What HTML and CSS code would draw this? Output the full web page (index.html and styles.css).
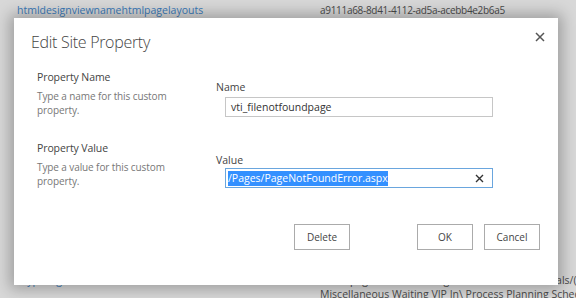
FILE: index.html
```html
<!DOCTYPE html>
<html>
<head>
<meta charset="utf-8">
<link rel="stylesheet" href="styles.css">
</head>
<body>
<div class="page">
  <div class="bg-row bg-top">
    <a class="bg-link">htmldesignviewnamehtmlpagelayouts</a>
    <span class="bg-text bg-guid">a9111a68-8d41-4112-ad5a-acebb4e2b6a5</span>
  </div>
  <div class="bg-spacer"></div>
  <div class="bg-row bg-mid">
    <a class="bg-link">htypeshgthmltlanderslhtmlhtml</a>
    <span class="bg-text">/sites/pages/ViewFormPages/Internals/MainPortals/(</span>
  </div>
  <div class="bg-row bg-bottom">
    <span class="bg-link"></span>
    <span class="bg-text">Miscellaneous Waiting VIP In\ Process Planning Schedule</span>
  </div>

  <div class="dialog">
    <div class="dialog-header">
      <h1 class="title">Edit Site Property</h1>
      <svg class="close" width="10" height="10" viewBox="0 0 10 10"><path d="M1 1L9 9M9 1L1 9" stroke="#555" stroke-width="1.5" fill="none"/></svg>
    </div>
    <div class="field field-name">
      <div class="field-info">
        <h3 class="field-title">Property Name</h3>
        <p class="field-desc">Type a name for this custom property.</p>
      </div>
      <div class="field-control">
        <div class="field-label">Name</div>
        <div class="input"><span class="input-text">vti_filenotfoundpage</span></div>
      </div>
    </div>
    <div class="field field-value">
      <div class="field-info">
        <h3 class="field-title">Property Value</h3>
        <p class="field-desc">Type a value for this custom property.</p>
      </div>
      <div class="field-control">
        <div class="field-label">Value</div>
        <div class="input input-focus"><span class="input-text selected">/Pages/PageNotFoundError.aspx</span>
          <svg class="clear" width="9" height="9" viewBox="0 0 9 9"><path d="M1 1L8 8M8 1L1 8" stroke="#333" stroke-width="1.4" fill="none"/></svg>
        </div>
      </div>
    </div>
    <div class="actions">
      <button class="btn">Delete</button>
      <div class="actions-right">
        <button class="btn">OK</button>
        <button class="btn">Cancel</button>
      </div>
    </div>
  </div>
</div>
</body>
</html>
```

FILE: styles.css
```css
html, body {
  margin: 0;
  padding: 0;
}
body {
  font-family: "Segoe UI", "Open Sans", sans-serif;
  background: #d8d8d8;
}
.page {
  position: relative;
  width: 576px;
  height: 298px;
  overflow: hidden;
  background: #d8d8d8;
}
.bg-row {
  display: flex;
  font-size: 10.5px;
  line-height: 14px;
  white-space: nowrap;
}
.bg-top {
  padding-top: 3px;
}
.bg-link {
  width: 303px;
  padding-left: 17px;
  color: #3a7ab8;
  flex: none;
}
.bg-text {
  color: #4a4a4a;
}
.bg-guid {
  font-size: 10px;
  letter-spacing: -0.3px;
}
.bg-spacer {
  height: 256px;
}
.dialog {
  position: absolute;
  left: 14px;
  top: 18px;
  width: 544px;
  height: 267px;
  box-sizing: border-box;
  background: #fff;
  box-shadow: 0 0 14px 4px rgba(0, 0, 0, 0.28);
  padding: 13px 17px 0 17px;
  color: #444;
}
.dialog-header {
  display: flex;
  justify-content: space-between;
  align-items: flex-start;
}
.title {
  margin: 0;
  font-size: 16px;
  font-weight: 300;
  letter-spacing: -0.3px;
  line-height: 22px;
  color: #444;
}
.close {
  margin-top: 1px;
  margin-right: -4px;
}
.field {
  display: grid;
  grid-template-columns: 179px 1fr;
  padding-left: 6px;
}
.field-name {
  margin-top: 17px;
}
.field-value {
  margin-top: 24px;
}
.field-title {
  margin: 0;
  font-size: 10.5px;
  font-weight: 400;
  letter-spacing: -0.1px;
  line-height: 15px;
  color: #444;
}
.field-desc {
  margin: 4px 0 0;
  width: 140px;
  font-size: 10px;
  letter-spacing: -0.1px;
  line-height: 14px;
  color: #777;
}
.field-label {
  font-size: 10.5px;
  line-height: 15px;
  color: #444;
}
.field-name .field-control {
  padding-top: 10px;
}
.field-value .field-control {
  padding-top: 12px;
}
.input {
  display: flex;
  align-items: center;
  justify-content: space-between;
  margin-left: 9px;
  margin-top: 2px;
  width: 268px;
  height: 20px;
  box-sizing: border-box;
  border: 1px solid #c6c6c6;
  padding: 0 5px 0 5px;
  font-size: 10.5px;
  color: #333;
}
.input-focus {
  margin-top: 0;
  border-color: #6aa6de;
  padding-left: 2px;
}
.selected {
  background: #3390ff;
  color: #fff;
  line-height: 15px;
}
.clear {
  margin-right: 3px;
}
.actions {
  display: flex;
  justify-content: space-between;
  margin-top: 36px;
  padding-left: 263px;
  padding-right: 1px;
}
.actions-right {
  display: flex;
  gap: 11px;
}
.btn {
  width: 56px;
  height: 26px;
  background: #fff;
  border: 1px solid #ababab;
  font-family: "Segoe UI", "Open Sans", sans-serif;
  font-size: 10px;
  color: #444;
  padding: 0;
}
```
